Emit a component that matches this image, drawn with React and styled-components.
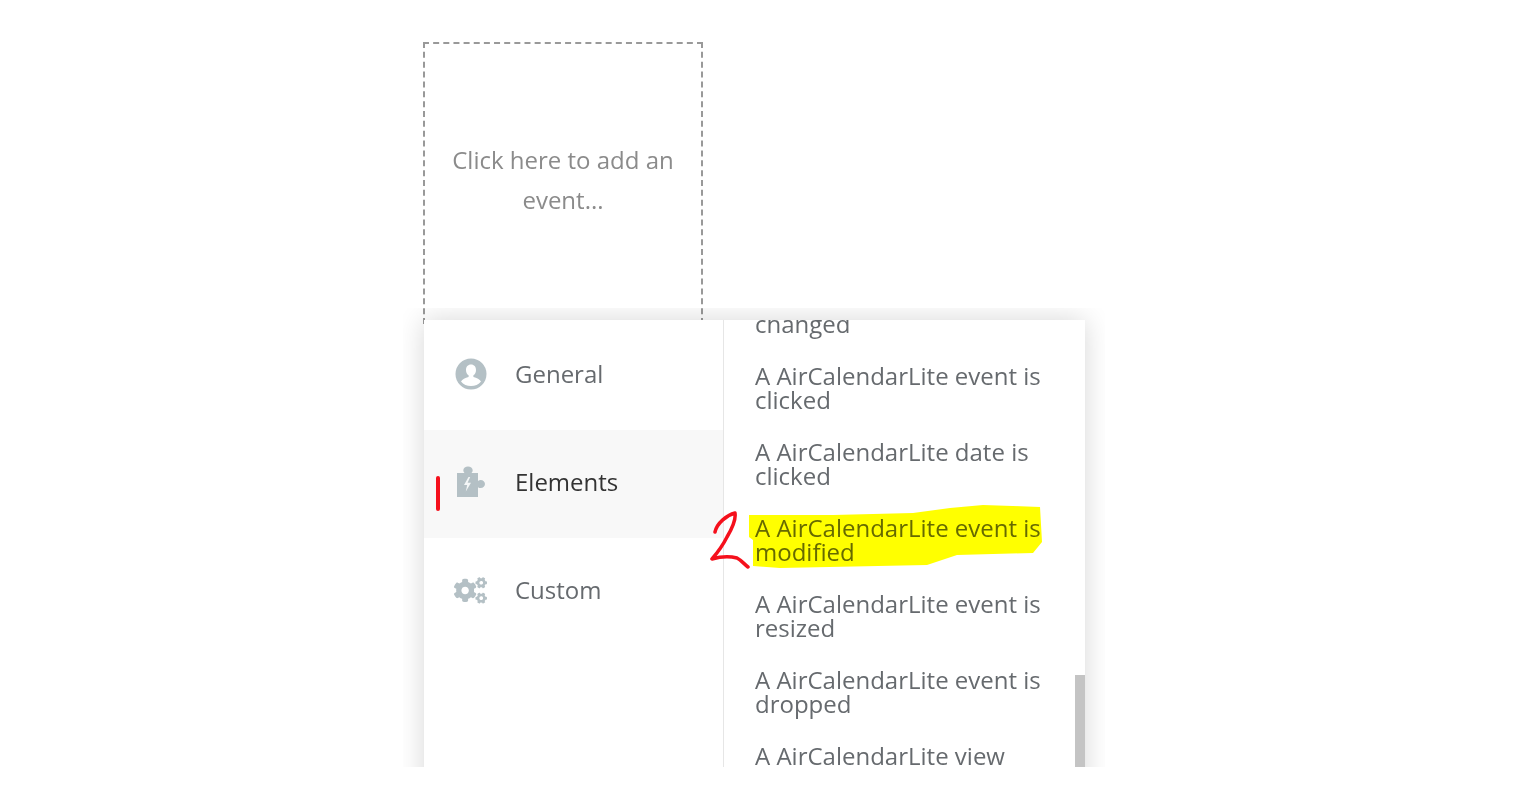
import React from "react";
import styled, { createGlobalStyle } from "styled-components";
import { FaCogs } from "react-icons/fa";

const events = [
  "A AirCalendarLite event is changed",
  "A AirCalendarLite event is clicked",
  "A AirCalendarLite date is clicked",
  "A AirCalendarLite event is modified",
  "A AirCalendarLite event is resized",
  "A AirCalendarLite event is dropped",
  "A AirCalendarLite view changed",
];

const UserIcon = () => (
  <svg width="32" height="32" viewBox="0 0 32 32">
    <circle cx="16" cy="16" r="15.5" fill="#b4c0c5" />
    <path
      d="M16 6.500c-3.200 0-5 2.400-5 5.400 0 2.300 1 4.300 2.600 5.400v1.800c-3.500 1-6.300 2.300-7.600 4.300 2.300 3 6 4.500 10 4.500s7.700-1.500 10-4.500c-1.300-2-4.100-3.300-7.600-4.300v-1.800c1.600-1.100 2.600-3.100 2.600-5.400 0-3-1.800-5.400-5-5.400z"
      fill="#fff"
    />
  </svg>
);

const PuzzleIcon = () => (
  <svg width="32" height="32" viewBox="0 0 32 32">
    <path
      d="M2 7h7.500c-.8-.8-1.200-1.800-1.200-2.800C8.300 2 10.500.5 13 .5s4.700 1.500 4.700 3.700c0 1-.4 2-1.200 2.800H23v8c.8-.6 1.700-.9 2.700-.9 2.400 0 4.300 1.800 4.300 4s-1.900 4-4.300 4c-1 0-1.900-.3-2.700-.9V31H2z"
      fill="#b4c0c5"
    />
    <path d="M13.500 11l-4.500 8h3.200l-1.400 6.500 5.200-8.700h-3.400l2.600-5.800z" fill="#f4f6f7" />
  </svg>
);

const App = () => {
  return (
    <>
      <GlobalStyle />
      <Page>
        <DropZone>Click here to add an event...</DropZone>
        <Clip>
          <Menu>
            <Categories>
              <Category>
                <IconBox>
                  <UserIcon />
                </IconBox>
                <CategoryLabel>General</CategoryLabel>
              </Category>
              <Category $active>
                <RedMark />
                <IconBox>
                  <PuzzleIcon />
                </IconBox>
                <CategoryLabel $active>Elements</CategoryLabel>
              </Category>
              <Category>
                <IconBox>
                  <FaCogs size={33} color="#b4c0c5" />
                </IconBox>
                <CategoryLabel>Custom</CategoryLabel>
              </Category>
            </Categories>
            <EventList>
              {events.map((text, i) => (
                <EventItem key={text}>
                  {i === 3 && (
                    <Annotation viewBox="710 502 345 70">
                      <polygon
                        fill="#ffff00"
                        points="749,515 833,515 913,513 950,508 983,505 1040,507 1042,542 1033,553 957,555 927,565 780,568 753,566 753,540 749,537"
                      />
                      <path
                        d="M715 532c2-9 12-17 20-19 1 6-2 14-8 24-4 8-9 15-15 22 7-2 17-3 25-1 4 2 7 6 11 9"
                        fill="none"
                        stroke="#f5101c"
                        strokeWidth="3.500"
                        strokeLinecap="round"
                        strokeLinejoin="round"
                      />
                    </Annotation>
                  )}
                  <EventText>{text}</EventText>
                </EventItem>
              ))}
            </EventList>
            <ScrollThumb />
          </Menu>
        </Clip>
      </Page>
    </>
  );
};

export default App;

const GlobalStyle = createGlobalStyle`
  html, body {
    margin: 0;
    padding: 0;
    background: #fff;
  }
  * {
    box-sizing: border-box;
  }
`;

const Page = styled.div`
  width: 1530px;
  height: 790px;
  overflow: hidden;
  padding: 42px 0 0 403px;
  font-family: "Open Sans", "Noto Sans", sans-serif;
  filter: blur(0.6px);
`;

const DropZone = styled.div`
  width: 280px;
  height: 282px;
  margin-left: 20px;
  padding: 0 20px 6px;
  display: flex;
  align-items: center;
  text-align: center;
  border: 2px dashed #999;
  color: #8b8b8b;
  font-size: 24px;
  line-height: 40px;
`;

const Clip = styled.div`
  position: relative;
  width: 702px;
  height: 459px;
  margin-top: -16px;
  overflow: hidden;
  padding: 12px 20px 0 21px;
`;

const Menu = styled.div`
  position: relative;
  display: grid;
  grid-template-columns: 300px 361px;
  height: 480px;
  background: #fff;
  box-shadow: 0 0 26px rgba(0, 0, 0, 0.16);
  overflow: hidden;
`;

const Categories = styled.div`
  padding-top: 2px;
  border-right: 1px solid #e6e6e6;
`;

const Category = styled.div`
  position: relative;
  display: flex;
  align-items: center;
  gap: 28px;
  height: 108px;
  padding: 0 0 6px 30px;
  background: ${(p) => (p.$active ? "#f8f8f8" : "transparent")};
`;

const IconBox = styled.span`
  display: flex;
  width: 33px;
  height: 33px;
  margin-top: 2px;
  align-items: center;
  justify-content: center;
`;

const CategoryLabel = styled.span`
  color: ${(p) => (p.$active ? "#333" : "#666a6e")};
  font-size: 24px;
`;

const RedMark = styled.span`
  position: absolute;
  left: 12px;
  top: 46px;
  width: 4px;
  height: 35px;
  border-radius: 2px;
  background: #f5101c;
`;

const EventList = styled.div`
  margin-top: -32px;
  padding: 0 10px 0 31px;
  display: flex;
  flex-direction: column;
  gap: 28px;
`;

const EventItem = styled.div`
  position: relative;
  width: 320px;
`;

const EventText = styled.div`
  position: relative;
  color: #666a6e;
  font-size: 24px;
  line-height: 24px;
  mix-blend-mode: multiply;
`;

const Annotation = styled.svg`
  position: absolute;
  left: -45px;
  top: -14px;
  width: 345px;
  height: 70px;
`;

const ScrollThumb = styled.div`
  position: absolute;
  right: 0;
  top: 355px;
  width: 10px;
  height: 125px;
  background: #c4c4c4;
`;
